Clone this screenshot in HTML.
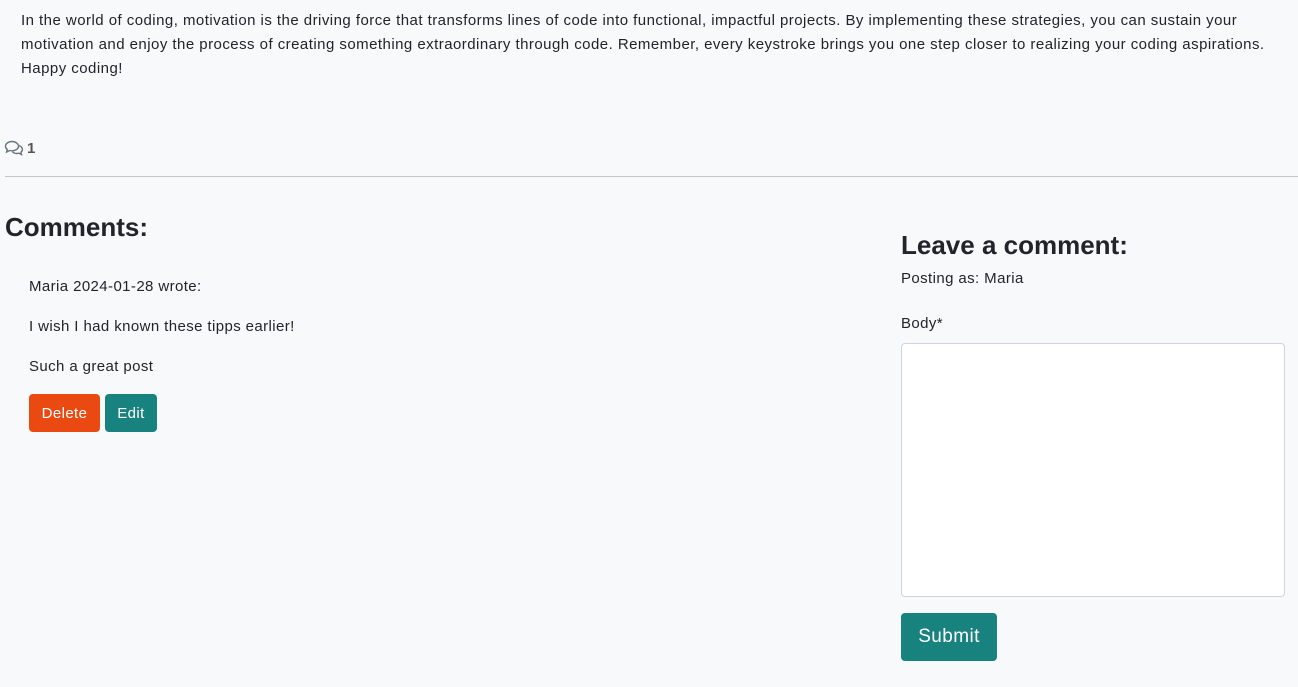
<!DOCTYPE html>
<html><head><style>
body{margin:0;background:#f8f9fb;font-family:"Liberation Sans",sans-serif;color:#212529;width:1298px;height:687px;overflow:hidden;position:relative;font-size:15px;letter-spacing:0.4px}
.a{position:absolute;white-space:nowrap}
.btn{position:absolute;color:#fff;border-radius:4px;display:flex;align-items:center;justify-content:center}
h2{margin:0;letter-spacing:0}
</style></head><body>
<div class="a" style="left:21px;top:9px;line-height:24px;font-size:15px;letter-spacing:0.46px">In the world of coding, motivation is the driving force that transforms lines of code into functional, impactful projects. By implementing these strategies, you can sustain your<br>motivation and enjoy the process of creating something extraordinary through code. Remember, every keystroke brings you one step closer to realizing your coding aspirations.<br>Happy coding!</div>
<svg class="a" style="left:4px;top:140px" width="20" height="16" viewBox="0 0 20 16" fill="none" stroke="#6c757d" stroke-width="1.4"><path d="M8 1.5C4.4 1.5 1.5 3.6 1.5 6.2c0 1.3.7 2.4 1.8 3.2L2.6 12l3-1.5c.8.2 1.6.3 2.4.3 3.6 0 6.5-2.1 6.5-4.6S11.6 1.5 8 1.5z"/><path d="M15 5.5c2 .8 3.4 2.3 3.4 4 0 1.1-.6 2.1-1.5 2.8l.6 2.2-2.6-1.3c-.7.2-1.4.3-2.2.3-1.8 0-3.4-.7-4.3-1.8"/></svg>
<div class="a" style="left:27px;top:140px;font-weight:bold;color:#555;font-size:15px;line-height:18px">1</div>
<div class="a" style="left:5px;top:176px;width:1293px;height:1px;background:#c4c6c8"></div>
<div class="a" style="left:5px;top:210px;font-size:26px;font-weight:bold;line-height:34px;letter-spacing:0">Comments:</div>
<div class="a" style="left:29px;top:278px">Maria 2024-01-28 wrote:</div>
<div class="a" style="left:29px;top:318px">I wish I had known these tipps earlier!</div>
<div class="a" style="left:29px;top:358px">Such a great post</div>
<div class="btn" style="left:29px;top:394px;width:71px;height:38px;background:#ea4a12">Delete</div>
<div class="btn" style="left:105px;top:394px;width:52px;height:38px;background:#18827f">Edit</div>
<div class="a" style="left:901px;top:228px;font-size:26px;font-weight:bold;line-height:34px;letter-spacing:0">Leave a comment:</div>
<div class="a" style="left:901px;top:270px">Posting as: Maria</div>
<div class="a" style="left:901px;top:315px">Body*</div>
<div class="a" style="left:901px;top:343px;width:382px;height:252px;background:#fff;border:1px solid #ced4da;border-radius:4px"></div>
<div class="btn" style="left:901px;top:613px;width:96px;height:48px;background:#18827f;font-size:19px">Submit</div>
</body></html>
